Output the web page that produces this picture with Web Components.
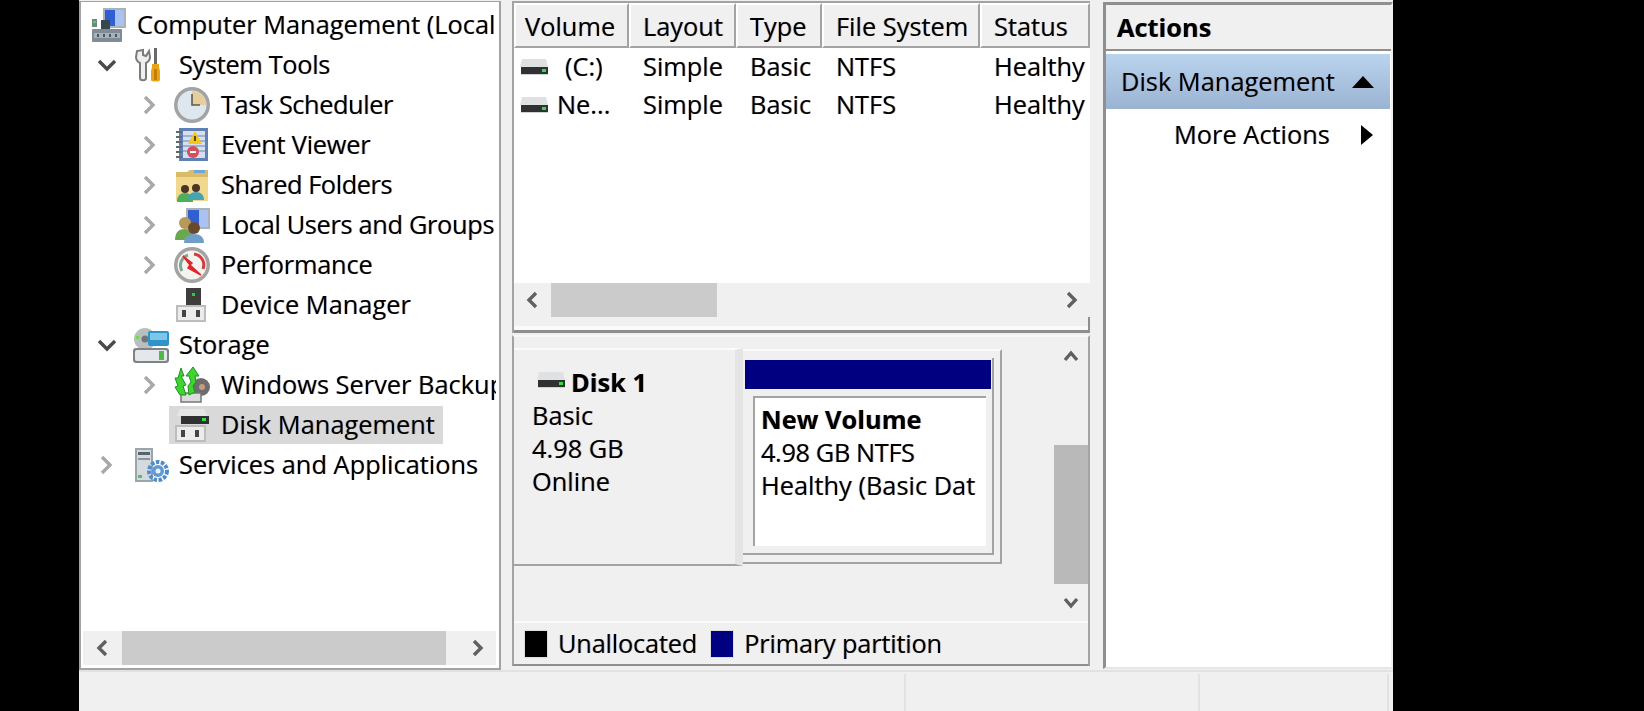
<!DOCTYPE html>
<html lang="en">
<head>
<meta charset="utf-8">
<title>Computer Management</title>
<style>
  html, body { margin: 0; height: 711px; overflow: hidden; background: #000; }
  body { font: 25.4px/1 "Open Sans", "Liberation Sans", sans-serif; color: #000; }
</style>
</head>
<body>
<mmc-window>
  <tree-pane>
    <tree-node icon="computer" level="0">Computer Management (Local</tree-node>
    <tree-node icon="tools" level="1" state="open" style="letter-spacing:-.35px">System Tools</tree-node>
    <tree-node icon="clock" level="2" state="closed" style="letter-spacing:-.45px">Task Scheduler</tree-node>
    <tree-node icon="event" level="2" state="closed" style="letter-spacing:-.25px">Event Viewer</tree-node>
    <tree-node icon="folder" level="2" state="closed" style="letter-spacing:-.45px">Shared Folders</tree-node>
    <tree-node icon="users" level="2" state="closed" style="letter-spacing:-.35px">Local Users and Groups</tree-node>
    <tree-node icon="perf" level="2" state="closed" style="letter-spacing:-.2px">Performance</tree-node>
    <tree-node icon="device" level="2">Device Manager</tree-node>
    <tree-node icon="storage" level="1" state="open">Storage</tree-node>
    <tree-node icon="backup" level="2" state="closed">Windows Server Backup</tree-node>
    <tree-node icon="disk" level="2" selected>Disk Management</tree-node>
    <tree-node icon="services" level="1" state="closed">Services and Applications</tree-node>
  </tree-pane>
  <center-pane>
    <list-view slot="top">
      <list-head>
        <span>Volume</span><span>Layout</span><span>Type</span><span>File System</span><span>Status</span>
      </list-head>
      <list-row><span><mmc-icon name="hdd"></mmc-icon><i style="margin-left:17px;font-style:normal">(C:)</i></span><span>Simple</span><span>Basic</span><span>NTFS</span><span>Healthy</span></list-row>
      <list-row><span><mmc-icon name="hdd"></mmc-icon><i style="margin-left:9px;font-style:normal">Ne...</i></span><span>Simple</span><span>Basic</span><span>NTFS</span><span>Healthy</span></list-row>
    </list-view>
    <disk-view slot="bottom">
      <disk-label>
        <span slot="title">Disk 1</span>
        <span>Basic</span><span>4.98 GB</span><span>Online</span>
      </disk-label>
      <disk-partition>
        <span slot="title">New Volume</span>
        <span style="letter-spacing:-.4px">4.98 GB NTFS</span><span>Healthy (Basic Data Partition)</span>
      </disk-partition>
    </disk-view>
  </center-pane>
  <actions-pane>
    <span slot="title">Disk Management</span>
    <span slot="more">More Actions</span>
  </actions-pane>
</mmc-window>

<script>
// icons are all 36x36 unless the caller says otherwise
const ICONS = {
  computer: `<rect x="12" y="1" width="23" height="20" fill="#a9b2b8"/><rect x="14" y="3" width="19" height="16" fill="#2f5fd0"/><path d="M24 3h9v16h-9z" fill="#a9c2f2"/><rect x="10" y="13" width="9" height="9" fill="#37474f"/><rect x="1" y="12" width="5" height="8" fill="#6f8a7d"/><rect x="2" y="14" width="3" height="2" fill="#45d465"/><rect x="1" y="22" width="30" height="13" rx="1" fill="#7f8c96"/><rect x="3" y="26" width="26" height="5" fill="#a8b2ba"/><path d="M6 27h2v3H6zm6 0h2v3h-2zm6 0h2v3h-2zm6 0h2v3h-2z" fill="#4a555d"/>`,
  tools: `<path d="M4 4 3 10c0 3 2 5 4 6v15c0 3 6 3 6 0V16c2-1 4-3 4-6l-1-6-3 5-3-1 0-5z" fill="#eef0f0" stroke="#7b7b7b" stroke-width="2"/><rect x="21" y="1" width="3" height="17" fill="#6a6a6a"/><path d="M19 17h7v3l1 4v9c0 2-9 2-9 0v-9l1-4z" fill="#e8a317"/><rect x="21" y="22" width="3" height="11" fill="#c67c0a"/>`,
  clock: `<circle cx="18" cy="18" r="18" fill="#a3a3a3"/><circle cx="18" cy="18" r="14.5" fill="#dfe7ee"/><path d="M18 18V4a14 14 0 0 1 14 14z" fill="#e7cd9b"/><path d="M18 7v11h8" fill="none" stroke="#5a5a5a" stroke-width="1.600"/>`,
  event: `<rect x="5" y="1" width="29" height="33" fill="#5f7fb5"/><rect x="9" y="4" width="22" height="27" fill="#d5dfee"/><path d="M9 9h22M9 14h22M9 19h22M9 24h22" stroke="#8ca3c7" stroke-width="1.5"/><path d="M2 5h6M2 10h6M2 15h6M2 20h6M2 25h6M2 30h6" stroke="#62686f" stroke-width="2"/><path d="M21 4 28 17H14z" fill="#f2c81e"/><rect x="20" y="9" width="2" height="5" fill="#5b4a00"/><circle cx="19" cy="25" r="6" fill="#d6505a"/><rect x="16" y="24" width="6" height="2" fill="#fff"/>`,
  folder: `<path d="M2 5h11l3-2h18v31H2z" fill="#d8bc6a"/><path d="M2 10h32v24H2z" fill="#f0d98f"/><rect x="20" y="3" width="11" height="3" fill="#6ea6d4"/><circle cx="11" cy="22" r="4" fill="#4a3526"/><path d="M3 35c0-6 3-9 8-9s8 3 8 9z" fill="#4fae5a"/><circle cx="22" cy="21" r="4" fill="#4a3526"/><path d="M14 33c0-5 3-8 8-8s8 3 8 8z" fill="#45a3b5"/>`,
  users: `<rect x="12" y="1" width="24" height="21" fill="#a9b2b8"/><rect x="14" y="3" width="20" height="17" fill="#2f5fd0"/><path d="M25 3h9v17h-9z" fill="#a9c2f2"/><circle cx="11" cy="16" r="6" fill="#b79a5a"/><path d="M1 33c0-8 4-11 10-11s9 3 9 11z" fill="#6aa84f"/><circle cx="20" cy="21" r="6" fill="#6b4a2c"/><path d="M10 36c0-6 4-9 10-9s10 3 10 9z" fill="#6f9fc9"/>`,
  perf: `<circle cx="18" cy="18" r="18" fill="#a3a3a3"/><circle cx="18" cy="18" r="14.5" fill="#f3f3ef"/><path d="M8 24A11 11 0 0 1 14 8" fill="none" stroke="#7fa898" stroke-width="3"/><path d="M20 7a11 11 0 0 1 9 15" fill="none" stroke="#d83b3b" stroke-width="3"/><path d="M9 9 18 16 16 18 27 28 14 21 16 18z" fill="#e0262c" stroke="#e0262c" stroke-width="1.5"/>`,
  device: `<rect x="12" y="1" width="15" height="20" fill="#3d3d3d"/><rect x="18" y="6" width="3" height="3" fill="#2ecc40"/><rect x="2" y="18" width="30" height="17" fill="#bdbdbd"/><rect x="4" y="20" width="26" height="13" fill="#ececec"/><rect x="8" y="23" width="4" height="7" fill="#444"/><rect x="22" y="23" width="4" height="7" fill="#444"/>`,
  storage: `<ellipse cx="12" cy="12" rx="11" ry="11" fill="#b9bfc0"/><circle cx="12" cy="12" r="3.500" fill="#6f777a"/><rect x="3" y="9" width="3" height="3" fill="#7bd25a"/><rect x="15" y="4" width="21" height="15" rx="2" fill="#2f92c9"/><rect x="17" y="6" width="17" height="7" fill="#7cc6ea"/><rect x="0" y="21" width="36" height="15" rx="3" fill="#7d8488"/><rect x="2" y="23" width="32" height="11" rx="2" fill="#e4e8ea"/><rect x="26" y="24" width="5" height="9" fill="#4fb84a"/>`,
  backup: `<circle cx="27" cy="20" r="9" fill="#6d6d6d"/><circle cx="28" cy="20" r="3" fill="#c79a80"/><path d="M7 26h20v9H7z" fill="#dcdcdc" stroke="#777" stroke-width="1.500"/><path d="M7 1l3 8-3 0 5 9-3 1 3 9H6L1 20l3-1-3-8 3 0z" fill="#3fd42e" stroke="#1f8f24"/><path d="M19 0l6 9h-4l1 6-3 4 2 6-6 3-1-9 3-4-2-6h-3z" fill="#3fd42e" stroke="#1f8f24"/>`,
  disk: `<path d="M6 2h24l3 7H3z" fill="#e4e6e7"/><rect x="7" y="9" width="28" height="8" fill="#2f3133"/><rect x="28" y="11" width="4" height="3" fill="#2fe04a"/><rect x="1" y="18" width="31" height="17" fill="#bdbdbd"/><rect x="3" y="20" width="27" height="13" fill="#ececec"/><rect x="7" y="23" width="4" height="7" fill="#444"/><rect x="21" y="23" width="4" height="7" fill="#444"/>`,
  services: `<rect x="2" y="1" width="18" height="34" fill="#9aa4ad"/><rect x="4" y="3" width="14" height="30" fill="#d4dade"/><rect x="5" y="5" width="12" height="3" fill="#59636b"/><rect x="5" y="11" width="12" height="2" fill="#8a949c"/><rect x="5" y="28" width="4" height="3" fill="#55c06a"/><circle cx="25" cy="24" r="9" fill="none" stroke="#4f8cc9" stroke-width="4" stroke-dasharray="3.500 1.500"/><circle cx="25" cy="24" r="6" fill="#5e9ad4"/><circle cx="25" cy="24" r="2.500" fill="#eaf3fb"/>`,
  hdd: `<path d="M2 1h24l2 8H0z" fill="#dfe1e2"/><rect x="1" y="9" width="27" height="7" fill="#2f3133"/><rect x="22" y="11" width="4" height="3" fill="#2fe04a"/><rect x="1" y="16" width="27" height="1" fill="#cfd2d4"/>`
};

class MmcIcon extends HTMLElement {
  constructor() {
    super();
    this.attachShadow({mode: 'open'});
  }
  connectedCallback() {
    const name = this.getAttribute('name');
    const w = name === 'hdd' ? 28 : 36;
    const h = name === 'hdd' ? 18 : 36;
    this.shadowRoot.innerHTML = `<style>:host{display:inline-flex;flex:none}svg{display:block}</style>
      <svg width="${w}" height="${h}" viewBox="0 0 ${w} ${h}">${ICONS[name] || ''}</svg>`;
  }
}

class MmcWindow extends HTMLElement {
  constructor() {
    super();
    this.attachShadow({mode: 'open'}).innerHTML = `<style>
      :host { display: flex; flex-direction: column; width: 1314px; height: 711px; margin-left: 79px;
              background: #f0f0f0; filter: blur(.7px);
              text-shadow: -.7px 0 rgba(205,110,0,.4), .7px 0 rgba(0,80,210,.4); }
      .panes { display: flex; height: 670px; padding-top: 1px; box-sizing: border-box; }
      .status { flex: 1; display: flex; border-top: 2px solid #e2e2e2; padding-top: 2px; }
      .status div { border-right: 2px solid #e2e2e2; box-sizing: border-box; }
    </style>
    <div class="panes"><slot></slot></div>
    <div class="status">
      <div style="width:827px"></div><div style="width:294px"></div><div style="width:189px"></div>
    </div>`;
  }
}

class TreePane extends HTMLElement {
  constructor() {
    super();
    this.attachShadow({mode: 'open'}).innerHTML = `<style>
      :host { display: flex; flex-direction: column; width: 422px; margin-right: 11px; box-sizing: border-box;
              background: #fff; border: 2px solid #a3a3a3; border-width: 1px 2px 2px 2px; }
      .rows { flex: 1; padding-top: 3px; overflow: hidden; margin-right: 3px; }
      mmc-scrollbar { margin: 0 3px 3px 2px; height: 34px; }
    </style>
    <div class="rows"><slot></slot></div>
    <mmc-scrollbar arrow="39" start="0" size="324"></mmc-scrollbar>`;
  }
}

class TreeNode extends HTMLElement {
  constructor() {
    super();
    this.attachShadow({mode: 'open'});
  }
  connectedCallback() {
    const level = +this.getAttribute('level');
    const state = this.getAttribute('state');
    const sel = this.hasAttribute('selected');
    const pad = [5, 7, 50][level];
    const chev = state === 'open' ? '<path d="M3 7 11 15 19 7" stroke="#4a4a4a"/>'
      : state === 'closed' ? '<path d="M6 3 14 11 6 19" stroke="#a8a8a8"/>' : '';
    const arrow = level === 0 ? '' :
      `<svg class="chev" width="22" height="22" viewBox="0 0 22 22" fill="none" stroke-width="3.400">${chev}</svg>`;
    this.shadowRoot.innerHTML = `<style>
      :host { display: flex; align-items: center; height: 40px; white-space: nowrap; }
      .row { display: flex; align-items: center; padding-left: ${pad}px; }
      .chev { margin-left: 8px; margin-right: ${level === 2 ? 8 : 10}px; flex: none; }
      .item { display: flex; align-items: center; height: 38px; padding: 0 8px 0 5px; background: ${sel ? '#d9d9d9' : 'none'}; }
      .label { margin-left: ${level === 2 ? 11 : 10}px; }
    </style>
    <div class="row">${arrow}<div class="item"><mmc-icon name="${this.getAttribute('icon')}"></mmc-icon><span class="label"><slot></slot></span></div></div>`;
  }
}

class MmcScrollbar extends HTMLElement {
  constructor() {
    super();
    this.attachShadow({mode: 'open'});
  }
  connectedCallback() {
    const v = this.hasAttribute('vertical');
    const a = this.getAttribute('arrow');
    const paths = v ? ['M3 13 9 6 15 13', 'M3 5 9 12 15 5'] : ['M12 2 5 9 12 16', 'M6 2 13 9 6 16'];
    const ic = d => `<svg width="18" height="18" viewBox="0 0 18 18"><path d="${d}" fill="none" stroke="#606060" stroke-width="3.400"/></svg>`;
    this.shadowRoot.innerHTML = `<style>
      :host { display: flex; flex: none; background: #f0f0f0; flex-direction: ${v ? 'column' : 'row'}; }
      .arr { flex: none; ${v ? 'height' : 'width'}: ${a}px; display: flex; align-items: center; justify-content: center; }
      .track { flex: 1; display: flex; flex-direction: ${v ? 'column' : 'row'}; }
      .thumb { flex: none; background: ${v ? '#b9b9b9' : '#cbcbcb'}; ${v ? 'height' : 'width'}: ${this.getAttribute('size')}px;
               margin-${v ? 'top' : 'left'}: ${this.getAttribute('start')}px; }
    </style>
    <div class="arr">${ic(paths[0])}</div><div class="track"><div class="thumb"></div></div><div class="arr">${ic(paths[1])}</div>`;
  }
}

class CenterPane extends HTMLElement {
  constructor() {
    super();
    this.attachShadow({mode: 'open'}).innerHTML = `<style>
      :host { display: flex; flex-direction: column; width: 578px; margin-right: 13px; }
    </style>
    <slot name="top"></slot><slot name="bottom"></slot>`;
  }
}

class ListView extends HTMLElement {
  constructor() {
    super();
    this.attachShadow({mode: 'open'}).innerHTML = `<style>
      :host { display: flex; flex-direction: column; height: 332px; box-sizing: border-box; background: #f0f0f0;
              border-top: 2px solid #a3a3a3; border-left: 2px solid #a3a3a3; --cols: 115px 107px 86px 158px 1fr; }
      .body { flex: 1; background: #fff; overflow: hidden; padding-top: 2px; }
      mmc-scrollbar { height: 34px; margin-right: 1px; }
      .sash { height: 16px; box-sizing: border-box; border-bottom: 3px solid #8f8f8f; border-right: 2px solid #8f8f8f; background: linear-gradient(#f0f0f0 9px, #fafafa 9px); }
    </style>
    <div class="body"><slot></slot></div>
    <mmc-scrollbar arrow="37" start="0" size="166"></mmc-scrollbar>
    <div class="sash"></div>`;
  }
}

class ListHead extends HTMLElement {
  constructor() {
    super();
    this.attachShadow({mode: 'open'}).innerHTML = `<style>
      :host { display: grid; grid-template-columns: var(--cols); height: 45px; margin-top: -2px; }
      ::slotted(span) { display: flex; align-items: center; padding: 2px 0 0 12px; background: #f0f0f0; white-space: nowrap;
                        border-right: 2px solid #a3a3a3; border-bottom: 2px solid #a3a3a3; border-left: 2px solid #fff; border-top: 2px solid #fff; box-sizing: border-box; }
      ::slotted(span:first-child) { padding-left: 9px; }
    </style><slot></slot>`;
  }
}

class ListRow extends HTMLElement {
  constructor() {
    super();
    this.attachShadow({mode: 'open'}).innerHTML = `<style>
      :host { display: grid; grid-template-columns: var(--cols); height: 38px; align-items: center; white-space: nowrap; }
      ::slotted(span) { display: flex; align-items: center; padding-left: 14px; }
      ::slotted(span:first-child) { padding-left: 6px; }
    </style><slot></slot>`;
  }
}

class DiskView extends HTMLElement {
  constructor() {
    super();
    this.attachShadow({mode: 'open'}).innerHTML = `<style>
      :host { display: flex; flex-direction: column; flex: 1; box-sizing: border-box; margin: 2px 0 4px;
              border-top: 2px solid #f7f7f7; border-left: 2px solid #a3a3a3; border-bottom: 2px solid #8f8f8f; border-right: 2px solid #a3a3a3; }
      .graph { flex: 1; display: flex; min-height: 0; }
      .canvas { flex: 1; display: flex; align-items: flex-start; padding-top: 11px; }
      mmc-scrollbar { width: 34px; }
      .legend { height: 43px; display: flex; align-items: center; padding-left: 10px; border-top: 2px solid #fafafa; box-sizing: border-box; }
      .sw { width: 24px; height: 28px; border: 1px solid #ddd; box-sizing: border-box; margin-right: 10px; }
      .tight { letter-spacing: -.2px; }
    </style>
    <div class="graph">
      <div class="canvas"><slot></slot></div>
      <mmc-scrollbar vertical arrow="37" start="71" size="139"></mmc-scrollbar>
    </div>
    <div class="legend">
      <div class="sw" style="background:#000"></div><span class="tight">Unallocated</span>
      <div class="sw" style="background:#000080;margin-left:13px"></div><span class="tight">Primary partition</span>
    </div>`;
  }
}

class DiskLabel extends HTMLElement {
  constructor() {
    super();
    this.attachShadow({mode: 'open'}).innerHTML = `<style>
      :host { display: block; width: 229px; height: 218px; box-sizing: border-box; flex: none; background: #f0f0f0;
              border-top: 2px solid #fbfbfb; border-right: 8px solid #e4e4e4; border-bottom: 2px solid #a3a3a3; white-space: nowrap; }
      .title { display: flex; align-items: center; padding-left: 23px; margin-top: 16px; height: 33px; font-weight: 700; }
      .title mmc-icon { margin-right: 6px; margin-top: -6px; }
      .lines { padding-left: 18px; display: grid; grid-auto-rows: 33px; align-items: center; }
    </style>
    <div class="title"><mmc-icon name="hdd"></mmc-icon><slot name="title"></slot></div>
    <div class="lines"><slot></slot></div>`;
  }
}

class DiskPartition extends HTMLElement {
  constructor() {
    super();
    this.attachShadow({mode: 'open'}).innerHTML = `<style>
      :host { display: block; width: 259px; height: 215px; box-sizing: border-box; flex: none; margin-top: 1px;
              border-top: 2px solid #fbfbfb; border-right: 2px solid #a3a3a3; border-bottom: 2px solid #a3a3a3; padding: 7px 6px 7px 0; }
      .inner { height: 100%; box-sizing: border-box; border-right: 2px solid #a3a3a3; border-bottom: 2px solid #a3a3a3; padding: 2px 1px 7px 2px; display: flex; flex-direction: column; }
      .bar { height: 29px; background: #000080; flex: none; }
      .vol { flex: 1; margin: 7px 5px 0 8px; box-sizing: border-box; background: #fff; border-top: 2px solid #a3a3a3; border-left: 2px solid #a3a3a3; padding: 5px 10px 0 6px; overflow: hidden; white-space: nowrap; }
      .lines { display: grid; grid-auto-rows: 33px; align-items: center; overflow: hidden; }
      .title { font-weight: 700; }
    </style>
    <div class="inner">
      <div class="bar"></div>
      <div class="vol">
        <div class="lines"><div class="title"><slot name="title"></slot></div><slot></slot></div>
      </div>
    </div>`;
  }
}

class ActionsPane extends HTMLElement {
  constructor() {
    super();
    this.attachShadow({mode: 'open'}).innerHTML = `<style>
      :host { display: flex; flex-direction: column; width: 290px; height: 667px; box-sizing: border-box; background: #fff;
              border-top: 3px solid #8f8f8f; border-left: 3px solid #8f8f8f; border-right: 2px solid #f0f0f0; border-bottom: 2px solid #e6e6e6; margin-top: 1px; white-space: nowrap; }
      .head { height: 46px; background: #f0f0f0; border-bottom: 2px solid #8f8f8f; padding: 2px 0 0 11px; box-sizing: border-box; display: flex; align-items: center; font-weight: 700; }
      .band { height: 55px; margin: 3px 1px 0 0; background: linear-gradient(#bad3ed, #99b3d2); display: flex; align-items: center; padding: 0 16px 0 15px; justify-content: space-between; }
      .more { display: flex; align-items: center; height: 52px; padding-left: 68px; justify-content: space-between; padding-right: 18px; }
    </style>
    <div class="head">Actions</div>
    <div class="band"><slot name="title"></slot><svg width="22" height="12" viewBox="0 0 22 12"><path d="M11 0 22 12H0z"/></svg></div>
    <div class="more"><slot name="more"></slot><svg width="12" height="20" viewBox="0 0 12 20"><path d="M0 0 12 10 0 20z"/></svg></div>`;
  }
}

customElements.define('mmc-icon', MmcIcon);
customElements.define('mmc-scrollbar', MmcScrollbar);
customElements.define('mmc-window', MmcWindow);
customElements.define('tree-pane', TreePane);
customElements.define('tree-node', TreeNode);
customElements.define('center-pane', CenterPane);
customElements.define('list-view', ListView);
customElements.define('list-head', ListHead);
customElements.define('list-row', ListRow);
customElements.define('disk-view', DiskView);
customElements.define('disk-label', DiskLabel);
customElements.define('disk-partition', DiskPartition);
customElements.define('actions-pane', ActionsPane);
</script>
</body>
</html>
